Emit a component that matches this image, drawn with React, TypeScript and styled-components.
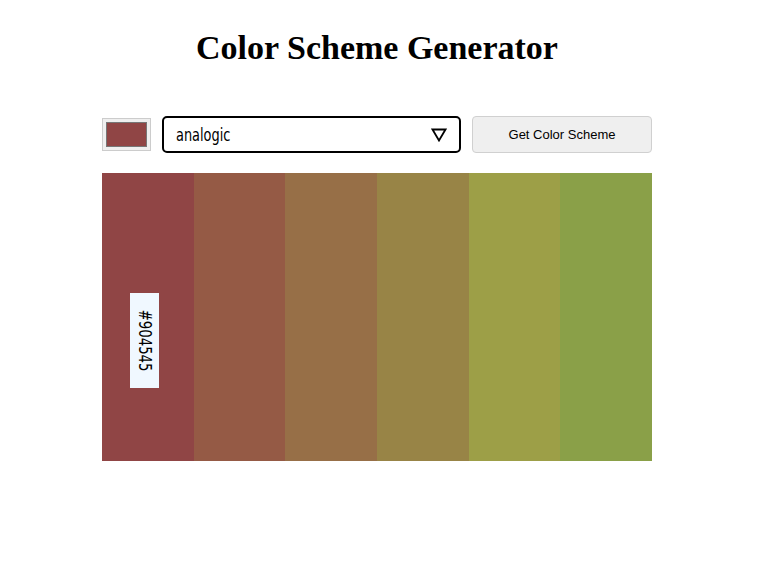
import { FC } from "react";
import styled, { createGlobalStyle } from "styled-components";

const GlobalStyle = createGlobalStyle`
  body {
    margin: 0;
    background: #fff;
    font-family: "Liberation Sans", Arial, sans-serif;
  }
`;

const colors = ["#904545", "#955a45", "#976f47", "#988446", "#9d9f47", "#8aa048"];

const Page = styled.main`
  width: 550px;
  margin-left: calc(50% - 276.5px);
  padding-top: 27px;
  display: flex;
  flex-direction: column;
`;

const Title = styled.h1`
  margin: 0 0 47px;
  text-align: center;
  font-family: "Liberation Serif", "DejaVu Serif", serif;
  font-weight: 700;
  font-size: 34px;
  line-height: 42px;
  color: #000;
`;

const Controls = styled.form`
  display: flex;
  align-items: center;
  gap: 11px;
  height: 37px;
  margin-bottom: 20px;
`;

const Swatch = styled.div`
  box-sizing: border-box;
  width: 49px;
  height: 33px;
  padding: 3px;
  border: 1px solid #ccc;
  background: #efefef;

  .fill {
    height: 100%;
    background: #904545;
    border: 1px solid #777;
    box-sizing: border-box;
  }
`;

// narrow face stand-in: DejaVu squeezed horizontally
const Narrow = styled.span`
  display: inline-block;
  font-family: "DejaVu Sans", sans-serif;
  font-size: 17px;
  transform: scaleX(0.76);
  transform-origin: left center;
`;

const Select = styled.div`
  box-sizing: border-box;
  width: 299px;
  height: 37px;
  border: 2px solid #000;
  border-radius: 5px;
  display: flex;
  align-items: center;
  justify-content: space-between;
  padding: 0 12px;
  color: #000;
`;

const Button = styled.button`
  box-sizing: border-box;
  width: 180px;
  height: 37px;
  margin-left: auto;
  border: 1px solid #d0d0d0;
  border-radius: 4px;
  background: #efefef;
  font-family: "Liberation Sans", Arial, sans-serif;
  font-size: 13px;
  color: #000;
`;

const Strip = styled.section`
  display: grid;
  grid-template-columns: repeat(6, 1fr);
  height: 288px;
`;

const Column = styled.div<{ $bg: string }>`
  position: relative;
  background: ${(p) => p.$bg};
`;

const HexLabel = styled.span`
  position: absolute;
  left: 28px;
  top: 120px;
  width: 29px;
  height: 95px;
  background: #f0f8ff;
  writing-mode: vertical-rl;
  display: flex;
  align-items: center;
  justify-content: center;
  color: #000;

  span {
    display: inline-block;
    font-family: "DejaVu Sans", sans-serif;
    font-size: 17px;
    transform: scaleY(0.78);
  }
`;

const App: FC = () => {
  return (
    <>
      <GlobalStyle />
      <Page>
        <Title>Color Scheme Generator</Title>
        <Controls>
          <Swatch>
            <div className="fill" />
          </Swatch>
          <Select>
            <Narrow>analogic</Narrow>
            <svg width="16" height="14" viewBox="0 0 16 14">
              <path d="M1.5 1.5h13L8 12.5z" fill="none" stroke="#000" strokeWidth="1.8" />
            </svg>
          </Select>
          <Button type="button">Get Color Scheme</Button>
        </Controls>
        <Strip>
          {colors.map((c, i) => (
            <Column key={c} $bg={c}>
              {i === 0 && (
                <HexLabel>
                  <span>{c}</span>
                </HexLabel>
              )}
            </Column>
          ))}
        </Strip>
      </Page>
    </>
  );
};

export default App;
